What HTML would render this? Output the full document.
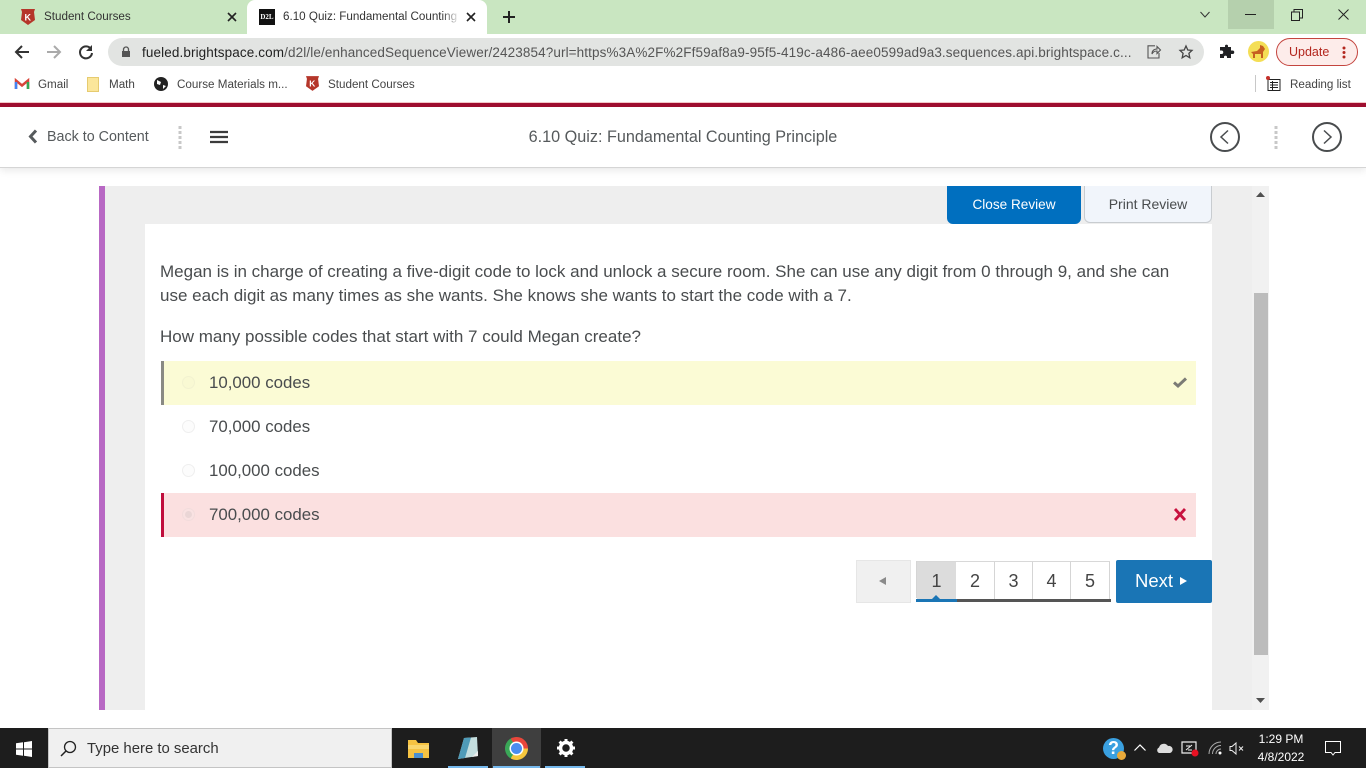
<!DOCTYPE html>
<html lang="en"><head><meta charset="utf-8"><title>6.10 Quiz</title>
<style>
html,body{margin:0;padding:0;width:1366px;height:768px;overflow:hidden;background:#fff}
body{position:relative;font-family:"Liberation Sans",sans-serif;color:#444}
.a{position:absolute;white-space:nowrap}
svg{position:absolute;overflow:visible}
.t{font-size:11.650px;line-height:16px;color:#333}
.q{font-size:17px;line-height:24px;color:#494c4e;left:160px}
.o{font-size:16.850px;line-height:20px;left:209px;color:#494c4e}
.r{position:absolute;left:182px;width:11px;height:11px;border:1px solid #efefef;border-radius:50%;background:#fcfcfc}
.n{position:absolute;top:561px;height:37px;width:38px;background:#fff;border-right:1px solid #d5d5d5;border-top:1px solid #d8d8d8;text-align:center;font-size:18px;line-height:38px;color:#444}
</style></head><body>
<!-- tab strip -->
<div class="a" style="left:0;top:0;width:1366px;height:34px;background:#c9e6c1"></div>
<div class="a" style="left:1228px;top:0;width:46px;height:29px;background:#b5d0ad"></div>
<div class="a" style="left:247px;top:0;width:240px;height:34px;background:#fff;border-radius:8px 8px 0 0"></div>
<svg style="left:21px;top:9px" width="14" height="16" viewBox="0 0 14 16"><path d="M0 0H14L13 3 14 11 7 16 0 11 1 3Z" fill="#b5362a"/><text x="3.500" y="11.500" font-size="9" font-weight="700" fill="#fff" font-family="Liberation Sans">K</text></svg>
<div class="a t" style="left:44px;top:9px">Student Courses</div>
<svg style="left:227px;top:12px" width="10" height="10"><path d="M1 1L9 9M9 1L1 9" stroke="#222" stroke-width="1.600"/></svg>
<div class="a" style="left:259px;top:9px;width:16px;height:16px;background:#111;color:#fff;font:700 7px/16px 'Liberation Serif',serif;text-align:center">D2L</div>
<div class="a t" style="left:283px;top:9px;width:175px;overflow:hidden">6.10 Quiz: Fundamental Counting</div>
<div class="a" style="left:442px;top:8px;width:18px;height:18px;background:linear-gradient(90deg,rgba(255,255,255,0),#fff)"></div>
<svg style="left:466px;top:12px" width="10" height="10"><path d="M1 1L9 9M9 1L1 9" stroke="#222" stroke-width="1.600"/></svg>
<svg style="left:503px;top:11px" width="12" height="12"><path d="M6 0V12M0 6H12" stroke="#222" stroke-width="2"/></svg>
<svg style="left:1200px;top:11px" width="10" height="7"><path d="M.5 1L5 6 9.500 1" stroke="#333" fill="none"/></svg>
<svg style="left:1245px;top:14px" width="11" height="2"><path d="M0 .5H11" stroke="#222"/></svg>
<svg style="left:1291px;top:9px" width="12" height="12"><path d="M.5 3H8.500V11.500H.5ZM3 3V.5H11.500V9H8.500" stroke="#222" fill="none"/></svg>
<svg style="left:1338px;top:9px" width="11" height="11"><path d="M.5 .5L10.500 10.500M10.500 .5L.5 10.500" stroke="#222"/></svg>
<!-- toolbar -->
<svg style="left:14px;top:44px" width="16" height="16"><path d="M15 8H2M8 2L2 8 8 14" stroke="#333" stroke-width="2" fill="none"/></svg>
<svg style="left:46px;top:44px" width="16" height="16"><path d="M1 8H14M8 2L14 8 8 14" stroke="#aaa" stroke-width="2" fill="none"/></svg>
<svg style="left:78px;top:44px" width="16" height="16"><path d="M13 5A6 6 0 1 0 14 9" stroke="#333" stroke-width="2" fill="none"/><path d="M14 1V7H8Z" fill="#333"/></svg>
<div class="a" style="left:108px;top:38px;width:1096px;height:28px;background:#e2e4e2;border-radius:14px"></div>
<svg style="left:121px;top:46px" width="10" height="12"><path d="M2.500 5V3.500A2.500 2.500 0 0 1 7.500 3.500V5" stroke="#555" fill="none" stroke-width="1.300"/><rect x="1" y="5" width="8" height="6" fill="#555"/></svg>
<div class="a" style="left:142px;top:45px;font-size:13.500px;line-height:16px;color:#555;letter-spacing:.115px"><span style="color:#222">fueled.brightspace.com</span>/d2l/le/enhancedSequenceViewer/2423854?url=https%3A%2F%2Ff59af8a9-95f5-419c-a486-aee0599ad9a3.sequences.api.brightspace.c...</div>
<svg style="left:1147px;top:45px" width="14" height="14"><path d="M8 .8H1V13H12V8M5 9C5 5 8 4 10 4V1.500L13.500 5 10 8.500V6C8 6 6 7 5 9Z" stroke="#555" fill="none" stroke-width="1.100"/></svg>
<svg style="left:1179px;top:45px" width="14" height="14"><path d="M7 1L8.800 5 13 5.400 9.900 8.300 10.800 12.800 7 10.500 3.200 12.800 4.100 8.300 1 5.400 5.200 5Z" stroke="#444" fill="none" stroke-width="1.300"/></svg>
<svg style="left:1218px;top:44px" width="15" height="15"><path d="M5 3H7V1.500A1.700 1.700 0 0 1 10 1.500V3H13V6.500H14.500A1.700 1.700 0 0 1 14.500 10H13V14H9V12.500A1.700 1.700 0 0 0 6 12.500V14H2V10H3.500A1.700 1.700 0 0 0 3.500 6.500H2V3Z" fill="#202124"/></svg>
<div class="a" style="left:1248px;top:41px;width:21px;height:21px;border-radius:50%;background:#f4de55"></div>
<svg style="left:1250px;top:45px" width="16" height="14"><path d="M1 7L7 6 10 3 10 0 13 1 15 4 13 7V13H11V9H5V13H3V9Z" fill="#c65f20"/></svg>
<div class="a" style="left:1276px;top:38px;width:80px;height:26px;border:1px solid #c4443e;border-radius:14px;background:#fdecea"></div>
<div class="a" style="left:1289px;top:45px;font-size:12.500px;line-height:15px;color:#b3261e">Update</div>
<svg style="left:1342px;top:46px" width="4" height="14"><circle cx="2" cy="2" r="1.500" fill="#b3261e"/><circle cx="2" cy="6.500" r="1.500" fill="#b3261e"/><circle cx="2" cy="11" r="1.500" fill="#b3261e"/></svg>
<!-- bookmarks -->
<svg style="left:15px;top:79px" width="14" height="11"><path d="M1 10V1.500L7 6.500 13 1.500V10" stroke="#d8453a" stroke-width="2.500" fill="none"/><path d="M1 10V3" stroke="#4285f4" stroke-width="2.500"/><path d="M13 10V3" stroke="#34a853" stroke-width="2.500"/></svg>
<div class="a t" style="left:38px;top:77px;color:#444">Gmail</div>
<div class="a" style="left:87px;top:77px;width:10px;height:13px;background:#fbe69a;border:1px solid #e6cb70"></div>
<div class="a t" style="left:109px;top:77px;color:#444">Math</div>
<svg style="left:154px;top:77px" width="14" height="14"><circle cx="7" cy="7" r="7" fill="#222"/><path d="M3 3L7 5 6 8 3 7ZM9 8L12 9 9 12Z" fill="#fff"/></svg>
<div class="a t" style="left:177px;top:77px;color:#444">Course Materials m...</div>
<svg style="left:306px;top:76px" width="13" height="15" viewBox="0 0 14 16"><path d="M0 0H14L13 3 14 11 7 16 0 11 1 3Z" fill="#b5362a"/><text x="3.500" y="11.500" font-size="9" font-weight="700" fill="#fff" font-family="Liberation Sans">K</text></svg>
<div class="a t" style="left:328px;top:77px;color:#444">Student Courses</div>
<div class="a" style="left:1255px;top:75px;width:1px;height:17px;background:#c8c8c8"></div>
<svg style="left:1266px;top:76px" width="15" height="16"><rect x="2" y="3.500" width="12" height="11" stroke="#222" fill="none"/><path d="M4 6.500H12M4 9H12M4 11.500H12M6.500 5V14" stroke="#222"/><circle cx="2" cy="2" r="2" fill="#c5302a"/></svg>
<div class="a t" style="left:1290px;top:77px;color:#444">Reading list</div>
<!-- d2l header -->
<div class="a" style="left:0;top:102px;width:1366px;height:1px;background:#f4c8c8"></div>
<div class="a" style="left:0;top:103px;width:1366px;height:4px;background:#a10f30"></div>
<div class="a" style="left:0;top:107px;width:1366px;height:60px;background:#fff;border-bottom:1px solid #d5d5d5;box-shadow:0 2px 8px rgba(0,0,0,.1)"></div>
<svg style="left:28px;top:129px" width="10" height="15"><path d="M8 1.500L2.500 7.500 8 13.500" stroke="#565a5c" stroke-width="3" fill="none"/></svg>
<div class="a" style="left:47px;top:128px;font-size:14.300px;line-height:18px;color:#565a5c">Back to Content</div>
<svg style="left:178px;top:125px" width="4" height="24"><path d="M2 1V24" stroke="#c8c8c8" stroke-width="3" stroke-dasharray="3 2"/></svg>
<svg style="left:210px;top:130px" width="18" height="14"><path d="M0 2H18M0 7H18M0 12H18" stroke="#3c3c3c" stroke-width="2.300"/></svg>
<div class="a" style="left:383px;width:600px;text-align:center;top:128px;font-size:16.200px;line-height:19px;color:#565a5c">6.10 Quiz: Fundamental Counting Principle</div>
<svg style="left:1210px;top:122px" width="30" height="30"><circle cx="15" cy="15" r="14" stroke="#494c4e" stroke-width="2" fill="none"/><path d="M18 8.500L11 15 18 21.500" stroke="#494c4e" stroke-width="1.500" fill="none"/></svg>
<svg style="left:1274px;top:125px" width="4" height="24"><path d="M2 1V24" stroke="#c8c8c8" stroke-width="3" stroke-dasharray="3 2"/></svg>
<svg style="left:1312px;top:122px" width="30" height="30"><circle cx="15" cy="15" r="14" stroke="#494c4e" stroke-width="2" fill="none"/><path d="M12 8.500L19 15 12 21.500" stroke="#494c4e" stroke-width="1.500" fill="none"/></svg>
<!-- content -->
<div class="a" style="left:99px;top:186px;width:6px;height:524px;background:#b868c4"></div>
<div class="a" style="left:105px;top:186px;width:1164px;height:524px;background:#eeeeee"></div>
<div class="a" style="left:145px;top:224px;width:1067px;height:486px;background:#fff"></div>
<div class="a" style="left:1252px;top:186px;width:17px;height:524px;background:#f1f1f1"></div>
<div class="a" style="left:1254px;top:293px;width:14px;height:362px;background:#bcbcbc"></div>
<svg style="left:1256px;top:192px" width="9" height="5"><path d="M0 5L4.500 0 9 5Z" fill="#505050"/></svg>
<svg style="left:1256px;top:698px" width="9" height="5"><path d="M0 0L4.500 5 9 0Z" fill="#505050"/></svg>
<div class="a" style="left:947px;top:186px;width:134px;height:38px;background:#006fbf;border-radius:0 0 6px 6px;color:#fff;font-size:13.600px;line-height:37px;text-align:center">Close Review</div>
<div class="a" style="left:1084px;top:186px;width:126px;height:36px;background:#f1f5fb;border:1px solid #c8ccd0;border-top:0;border-radius:0 0 6px 6px;color:#494c4e;font-size:14px;line-height:37px;text-align:center">Print Review</div>
<div class="a q" style="top:260px">Megan is in charge of creating a five-digit code to lock and unlock a secure room. She can use any digit from 0 through 9, and she can</div>
<div class="a q" style="top:284px">use each digit as many times as she wants. She knows she wants to start the code with a 7.</div>
<div class="a q" style="top:325px">How many possible codes that start with 7 could Megan create?</div>
<div class="a" style="left:161px;top:361px;width:1035px;height:44px;background:#fbfbd5"></div>
<div class="a" style="left:161px;top:361px;width:3px;height:44px;background:#8a8a84"></div>
<div class="a" style="left:161px;top:493px;width:1035px;height:44px;background:#fbe0e0"></div>
<div class="a" style="left:161px;top:493px;width:3px;height:44px;background:#c00d3c"></div>
<div class="r" style="top:376px;background:#f9f9d3;border-color:#f2f2d0"></div>
<div class="r" style="top:420px"></div>
<div class="r" style="top:464px"></div>
<div class="r" style="top:508px;background:#f9e2e2;border-color:#f2dcdc"></div>
<div class="a" style="left:185px;top:511px;width:7px;height:7px;border-radius:50%;background:#ead6d6"></div>
<div class="a o" style="top:373px">10,000 codes</div>
<div class="a o" style="top:417px">70,000 codes</div>
<div class="a o" style="top:461px">100,000 codes</div>
<div class="a o" style="top:505px">700,000 codes</div>
<svg style="left:1173px;top:377px" width="14" height="11"><path d="M1 5.500L5 9 13 1.500" stroke="#7b7b75" stroke-width="3" fill="none"/></svg>
<svg style="left:1174px;top:508px" width="12" height="13"><path d="M1 1L11 12M11 1L1 12" stroke="#c8103e" stroke-width="2.800"/></svg>
<!-- pagination -->
<div class="a" style="left:856px;top:560px;width:53px;height:41px;background:#f0f0f0;border:1px solid #e6e6e6"></div>
<svg style="left:879px;top:577px" width="7" height="8"><path d="M7 0V8L0 4Z" fill="#8a8a8a"/></svg>
<div class="a" style="left:916px;top:561px;width:194px;height:37px;border-left:1px solid #d5d5d5"></div>
<div class="n" style="left:917px;width:39px;background:#dcdcdc;border-right:0">1</div>
<div class="n" style="left:956px">2</div>
<div class="n" style="left:995px;width:37px">3</div>
<div class="n" style="left:1033px;width:37px">4</div>
<div class="n" style="left:1071px;width:38px">5</div>
<div class="a" style="left:916px;top:599px;width:195px;height:3px;background:#555"></div>
<div class="a" style="left:916px;top:599px;width:41px;height:3px;background:#1a75b5"></div>
<svg style="left:932px;top:595px" width="8" height="4"><path d="M0 4L4 0 8 4Z" fill="#1a75b5"/></svg>
<div class="a" style="left:1116px;top:560px;width:96px;height:43px;background:#1a75b5;border-radius:2px"></div>
<div class="a" style="left:1135px;top:570px;font-size:18.500px;line-height:22px;color:#fff">Next</div>
<svg style="left:1180px;top:577px" width="7" height="8"><path d="M0 0V8L7 4Z" fill="#fff"/></svg>
<!-- taskbar -->
<div class="a" style="left:0;top:728px;width:1366px;height:40px;background:#1d1d1d"></div>
<svg style="left:16px;top:741px" width="16" height="16"><path d="M0 2.300L7 1.300V7.500H0ZM8 1.200L16 0V7.500H8ZM0 8.500H7V14.700L0 13.700ZM8 8.500H16V16L8 14.800Z" fill="#fff"/></svg>
<div class="a" style="left:48px;top:728px;width:344px;height:40px;background:#f0f0f0;box-sizing:border-box;border:1px solid #c4c4c4"></div>
<svg style="left:60px;top:740px" width="17" height="17"><circle cx="10" cy="7" r="5.500" stroke="#222" stroke-width="1.300" fill="none"/><path d="M6 11L1 16" stroke="#222" stroke-width="1.500"/></svg>
<div class="a" style="left:87px;top:740px;font-size:14.900px;line-height:18px;color:#333">Type here to search</div>
<svg style="left:408px;top:739px" width="21" height="20"><path d="M0 1H8L10 4H21V19H0Z" fill="#f5c242"/><path d="M0 6H21V10H0Z" fill="#f9d66e"/><path d="M6 14H15V19H6Z" fill="#4a8fd0"/></svg>
<svg style="left:457px;top:737px" width="21" height="24"><path d="M7 1L20 0 21 19 1 22Z" fill="#c4dedf"/><path d="M7 1L14 .5 8 21 1 22Z" fill="#4f9bb8"/><path d="M15 20L21 14V19Z" fill="#eee"/></svg>
<div class="a" style="left:492px;top:728px;width:49px;height:40px;background:#3f3f3f"></div>
<div class="a" style="left:505px;top:737px;width:23px;height:23px;border-radius:50%;background:conic-gradient(#e8473b 0 120deg,#f6c73d 120deg 240deg,#3aa757 240deg 360deg);transform:rotate(-30deg)"></div>
<div class="a" style="left:511px;top:743px;width:11px;height:11px;border-radius:50%;background:#4a8df0;box-shadow:0 0 0 1.500px #fff"></div>
<svg style="left:556px;top:738px" width="20" height="20" viewBox="0 0 20 20"><circle cx="10" cy="10" r="5.500" stroke="#fff" stroke-width="3.500" fill="none"/><path d="M10 1V4M10 16V19M1 10H4M16 10H19M3.600 3.600L5.800 5.800M14.200 14.200L16.400 16.400M16.400 3.600L14.200 5.800M5.800 14.200L3.600 16.400" stroke="#fff" stroke-width="3"/></svg>
<div class="a" style="left:448px;top:766px;width:40px;height:2px;background:#76b9ed"></div>
<div class="a" style="left:493px;top:766px;width:47px;height:2px;background:#76b9ed"></div>
<div class="a" style="left:545px;top:766px;width:40px;height:2px;background:#76b9ed"></div>
<div class="a" style="left:1103px;top:738px;width:21px;height:21px;border-radius:50%;background:#3aa0e0;color:#fff;font:700 18px/21px 'Liberation Sans',sans-serif;text-align:center">?</div>
<div class="a" style="left:1117px;top:751px;width:9px;height:9px;border-radius:50%;background:#e8a93a"></div>
<svg style="left:1134px;top:744px" width="12" height="7"><path d="M.5 6.500L6 1 11.500 6.500" stroke="#fff" fill="none" stroke-width="1.200"/></svg>
<svg style="left:1156px;top:743px" width="17" height="10"><path d="M3 10A3 3 0 0 1 3 4.500 5 5 0 0 1 12 3 3.600 3.600 0 0 1 14 10Z" fill="#ddd"/></svg>
<svg style="left:1181px;top:740px" width="18" height="18"><path d="M1 2H15V13H1Z" stroke="#eee" fill="none" stroke-width="1.200"/><path d="M5 10L11 5M5 6H9M7 10H11" stroke="#eee"/><circle cx="14" cy="13" r="3.500" fill="#e81123"/></svg>
<svg style="left:1208px;top:741px" width="14" height="14"><path d="M1 13A12 12 0 0 1 13 1M4.500 13A8.500 8.500 0 0 1 13 4.500M8 13A5 5 0 0 1 13 8" stroke="#aaa" fill="none"/><circle cx="12" cy="12" r="1.500" fill="#fff"/></svg>
<svg style="left:1229px;top:742px" width="15" height="13"><path d="M1 4.500H3L7 1V12L3 8.500H1Z" stroke="#eee" fill="none"/><path d="M10 4.500L14 8.500M14 4.500L10 8.500" stroke="#eee"/></svg>
<div class="a" style="left:1251px;top:730px;width:60px;text-align:center;font-size:12px;line-height:18px;color:#fff">1:29 PM<br>4/8/2022</div>
<svg style="left:1325px;top:741px" width="16" height="15"><path d="M.5 .5H15.500V11.500H10L8 14 6 11.500H.5Z" stroke="#fff" fill="none"/></svg>
</body></html>
